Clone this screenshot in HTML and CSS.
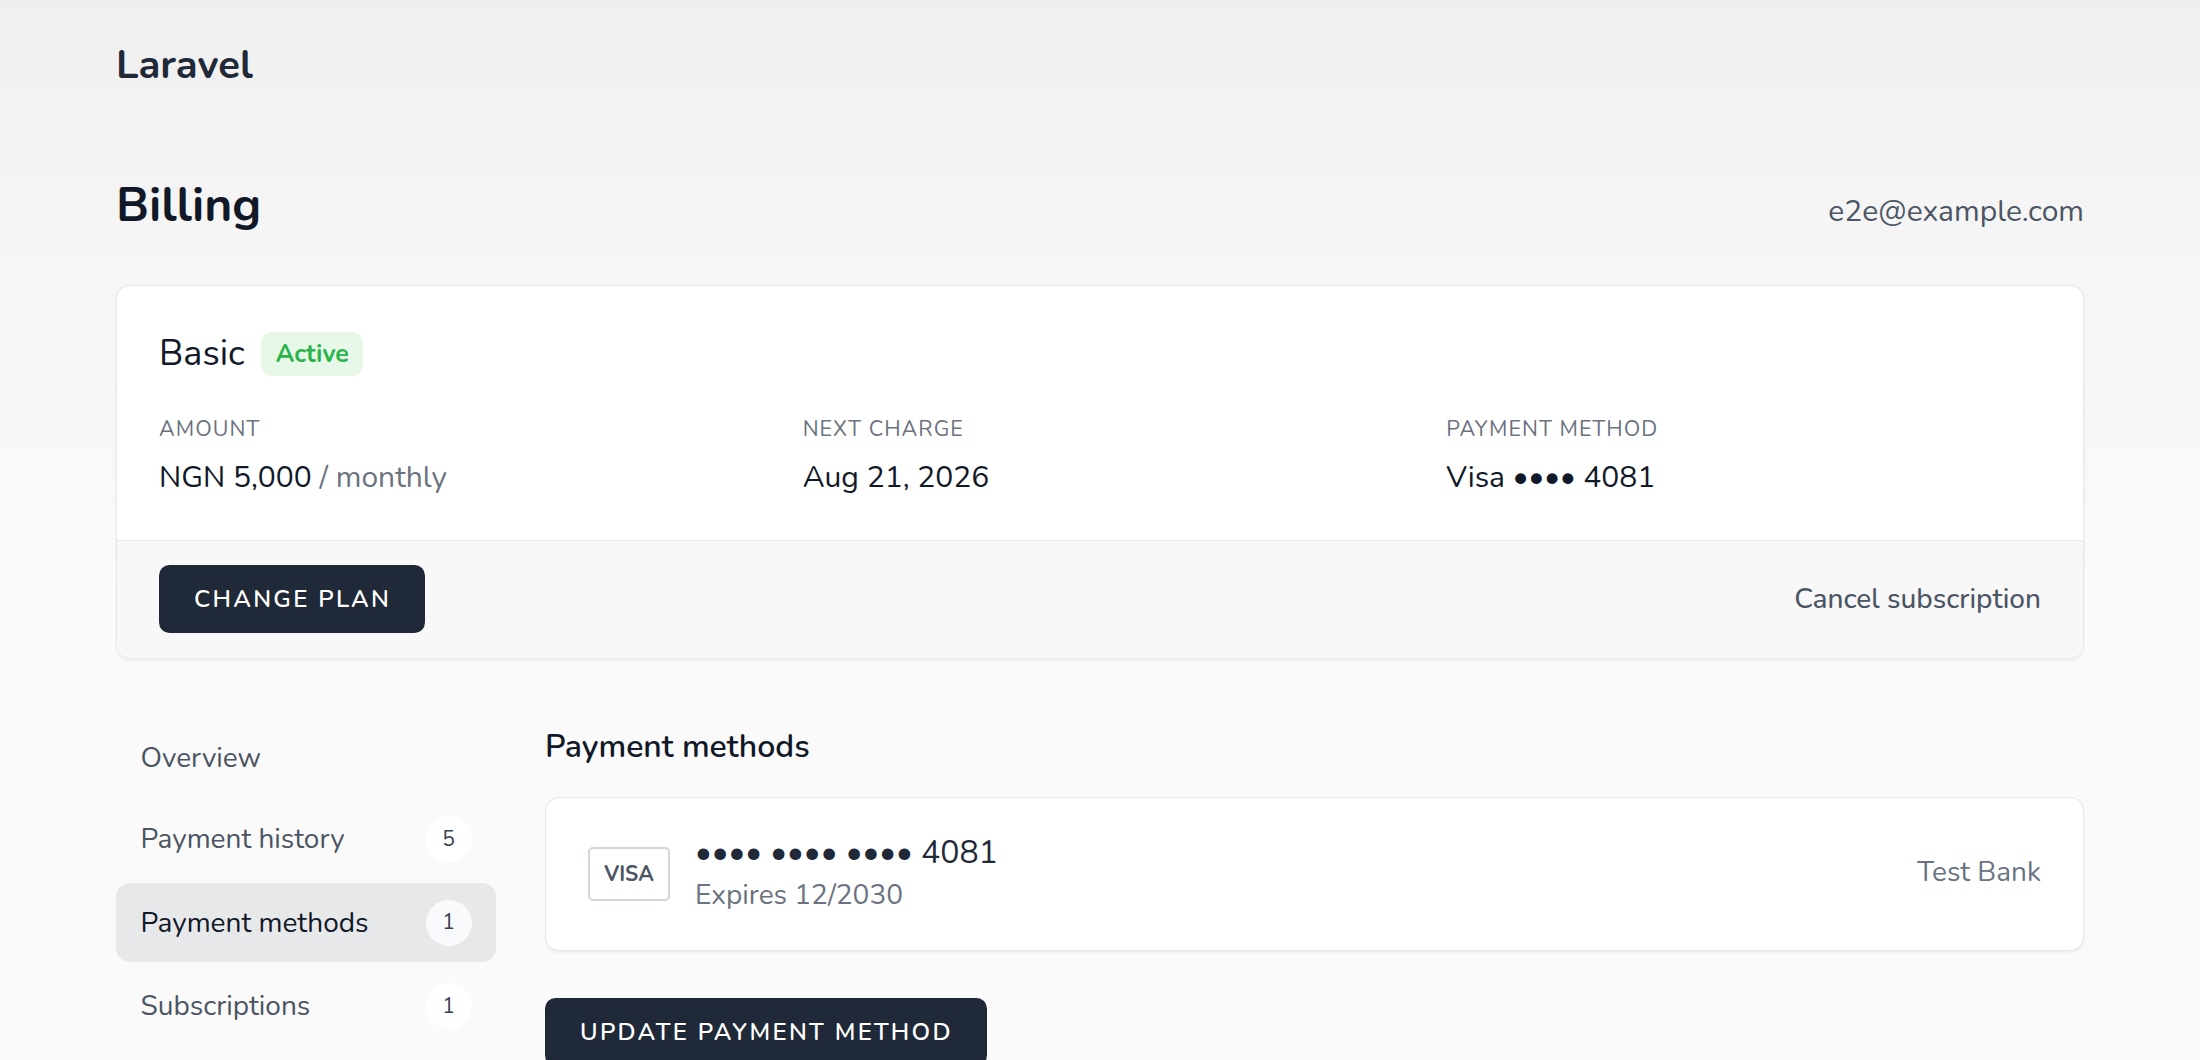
FILE: index.html
```html
<!DOCTYPE html>
<html lang="en">
<head>
<meta charset="utf-8">
<title>Billing</title>
<link rel="stylesheet" href="styles.css">
</head>
<body>
<div class="page">
  <header class="topbar">
    <div class="brand">Laravel</div>
  </header>

  <div class="title-row">
    <h1 class="title">Billing</h1>
    <div class="email">e2e@example.com</div>
  </div>

  <section class="plan-card">
    <div class="plan-body">
      <div class="plan-head">
        <span class="plan-name">Basic</span>
        <span class="status">Active</span>
      </div>
      <div class="plan-grid">
        <div class="stat">
          <div class="stat-label">Amount</div>
          <div class="stat-value">NGN 5,000 <span class="muted">/ monthly</span></div>
        </div>
        <div class="stat">
          <div class="stat-label">Next charge</div>
          <div class="stat-value">Aug 21, 2026</div>
        </div>
        <div class="stat">
          <div class="stat-label">Payment method</div>
          <div class="stat-value">Visa •••• 4081</div>
        </div>
      </div>
    </div>
    <div class="plan-foot">
      <button class="btn">Change plan</button>
      <a class="link">Cancel subscription</a>
    </div>
  </section>

  <div class="lower">
    <nav class="side">
      <a class="nav-item">Overview</a>
      <a class="nav-item">Payment history <span class="count">5</span></a>
      <a class="nav-item active">Payment methods <span class="count">1</span></a>
      <a class="nav-item">Subscriptions <span class="count">1</span></a>
    </nav>

    <main class="main">
      <h2 class="section-title">Payment methods</h2>
      <div class="pm-card">
        <div class="brand-box">VISA</div>
        <div class="pm-info">
          <div class="pm-number">•••• •••• •••• 4081</div>
          <div class="pm-exp">Expires 12/2030</div>
        </div>
        <div class="pm-bank">Test Bank</div>
      </div>
      <button class="btn btn-update">Update payment method</button>
    </main>
  </div>
</div>
</body>
</html>
```

FILE: styles.css
```css
html {
  scrollbar-width: none;
}

body {
  margin: 0;
  min-height: 100vh;
  font-family: Nunito, Lato, "Noto Sans", sans-serif;
  color: #111827;
  background: linear-gradient(180deg, #efefef 0px, #f6f6f6 260px, #fafafa 600px, #fafafa 100%);
}

.page {
  width: 1968px;
  margin: 0 auto;
  padding-top: 39px;
}

.brand {
  font-size: 40px;
  line-height: 52px;
  font-weight: 700;
  color: #1f2937;
}

.title-row {
  margin-top: 84px;
  display: flex;
  justify-content: space-between;
  align-items: baseline;
}

.title {
  margin: 0;
  font-size: 48px;
  line-height: 60px;
  font-weight: 700;
  color: #111827;
}

.email {
  font-size: 30px;
  color: #4b5563;
}

.plan-card {
  margin-top: 50px;
  background: #fff;
  border: 1px solid #e5e7eb;
  border-radius: 14px;
  box-shadow: 0 1.75px 3.5px rgba(0, 0, 0, 0.05);
  overflow: hidden;
}

.plan-body {
  padding: 42px 42px 41px;
  border-bottom: 1px solid #e5e7eb;
}

.plan-head {
  display: flex;
  align-items: center;
  gap: 16px;
  height: 52px;
}

.plan-name {
  font-size: 36px;
  line-height: 52px;
  color: #111827;
}

.status {
  display: inline-flex;
  align-items: center;
  height: 44px;
  padding: 0 14px 0 15px;
  border-radius: 10.5px;
  background: #e7f8e9;
  color: #2bb44b;
  font-size: 25px;
  font-weight: 700;
}

.plan-grid {
  margin-top: 35px;
  display: grid;
  grid-template-columns: repeat(3, 1fr);
  column-gap: 49px;
}

.stat-label {
  font-size: 21.5px;
  line-height: 28px;
  text-transform: uppercase;
  letter-spacing: 1.05px;
  color: #6b7280;
}

.stat-value {
  margin-top: 14px;
  font-size: 30px;
  line-height: 42px;
  color: #111827;
}

.muted {
  color: #6b7280;
}

.plan-foot {
  display: flex;
  justify-content: space-between;
  align-items: center;
  padding: 24px 42px 25px;
  background: #f8f8f9;
}

.btn {
  height: 68px;
  padding: 0 34px 0 35px;
  border: 0;
  border-radius: 10.5px;
  background: #1f2937;
  color: #fff;
  font-family: inherit;
  font-size: 24px;
  font-weight: 600;
  letter-spacing: 2.3px;
  text-transform: uppercase;
}

.link {
  font-size: 28px;
  font-weight: 500;
  color: #4b5563;
}

.lower {
  margin-top: 61px;
  display: flex;
  gap: 49px;
  align-items: flex-start;
}

.side {
  flex: none;
  width: 380px;
  display: flex;
  flex-direction: column;
  gap: 4.5px;
}

.nav-item {
  display: flex;
  align-items: center;
  justify-content: space-between;
  padding: 16.5px 24.5px;
  border-radius: 14px;
  font-size: 28px;
  line-height: 42px;
  color: #4b5563;
}

.nav-item.active {
  background: #e7e8ea;
  color: #111827;
}

.count {
  width: 46px;
  height: 46px;
  border-radius: 50%;
  background: #ffffff;
  display: flex;
  align-items: center;
  justify-content: center;
  font-size: 21px;
  line-height: 1;
  color: #374151;
}

.nav-item.active .count {
  background: #f9fafb;
}

.main {
  flex: 1;
  min-width: 0;
}

.section-title {
  margin: 2px 0 0;
  font-size: 32px;
  line-height: 49px;
  font-weight: 600;
  color: #111827;
}

.pm-card {
  margin-top: 26px;
  display: flex;
  align-items: center;
  gap: 25px;
  padding: 34px 42px;
  background: #fff;
  border: 1px solid #e5e7eb;
  border-radius: 14px;
  box-shadow: 0 1.75px 3.5px rgba(0, 0, 0, 0.05);
}

.brand-box {
  flex: none;
  box-sizing: border-box;
  width: 82px;
  height: 54px;
  border: 2px solid #d1d5db;
  border-radius: 5px;
  display: flex;
  align-items: center;
  justify-content: center;
  font-size: 21px;
  font-weight: 700;
  color: #4b5563;
}

.pm-info {
  flex: 1;
}

.pm-number {
  font-size: 32px;
  line-height: 42px;
  color: #1f2937;
}

.pm-exp {
  font-size: 28px;
  line-height: 42px;
  color: #6b7280;
}

.pm-bank {
  font-size: 28px;
  line-height: 42px;
  color: #6b7280;
  margin-bottom: 5px;
}

.btn-update {
  margin-top: 47px;
  display: block;
}
```
